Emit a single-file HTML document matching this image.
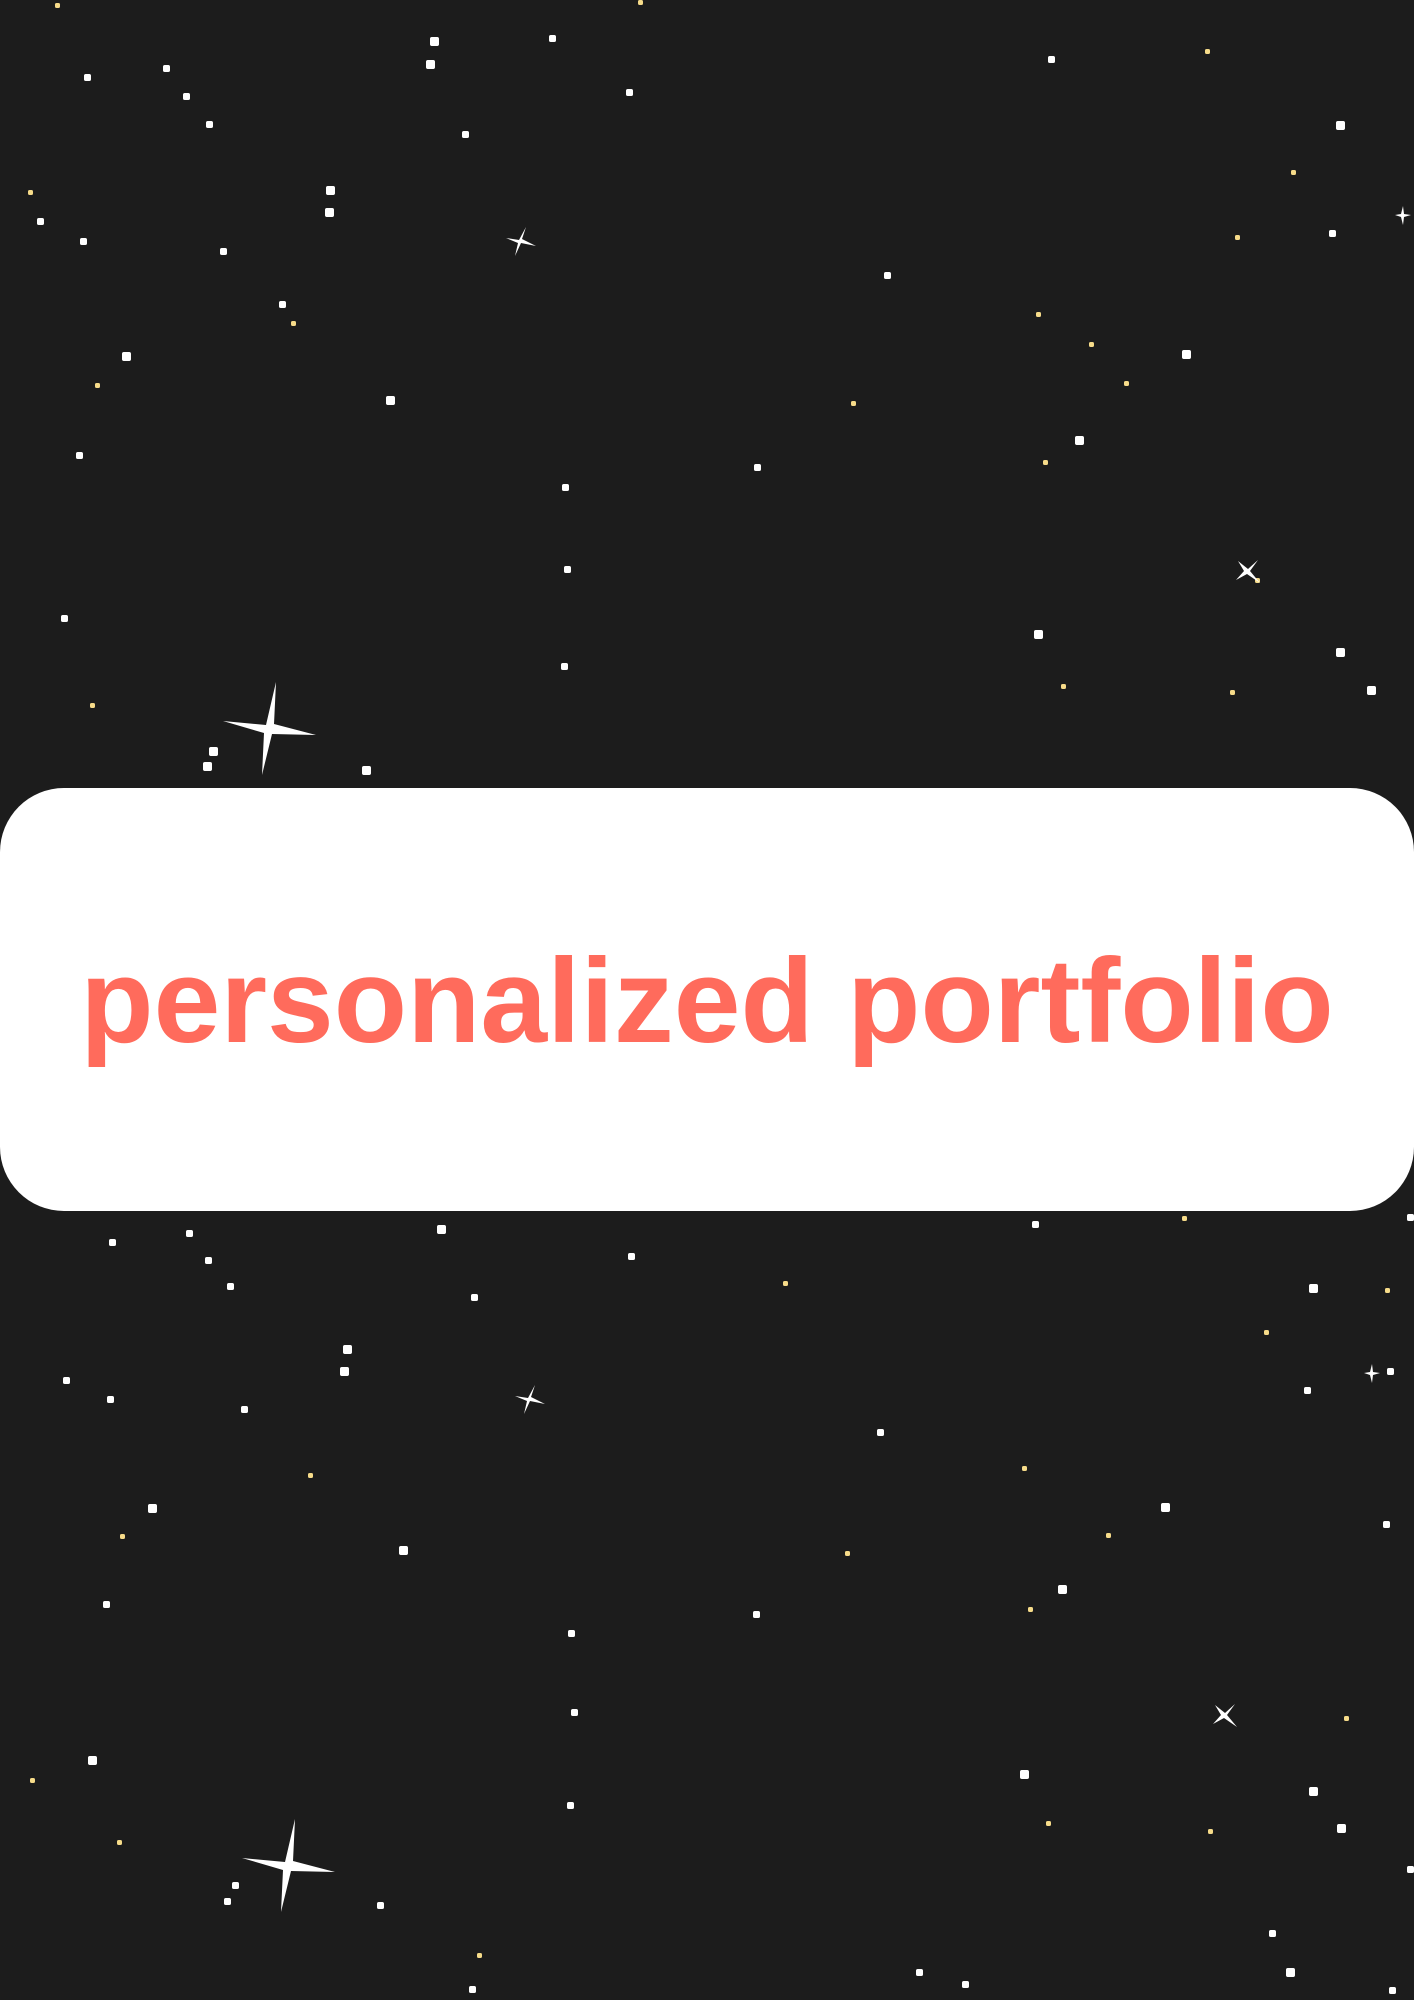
<!DOCTYPE html>
<html><head><meta charset="utf-8"><style>
html,body{margin:0;padding:0;}
body{width:1414px;height:2000px;background:#1c1c1c;position:relative;overflow:hidden;font-family:"Liberation Sans",sans-serif;}
.w,.y{position:absolute;left:0;top:0;width:1px;height:1px;border-radius:50%;}
.w{box-shadow:87px 77px 0 3px #fff,166px 68px 0 3px #fff,186px 96px 0 3px #fff,209px 124px 0 3px #fff,434px 41px 0 4px #fff,430px 64px 0 4px #fff,552px 38px 0 3px #fff,629px 92px 0 3px #fff,465px 134px 0 3px #fff,330px 190px 0 4px #fff,329px 212px 0 4px #fff,83px 241px 0 3px #fff,40px 221px 0 3px #fff,223px 251px 0 3px #fff,126px 356px 0 4px #fff,390px 400px 0 4px #fff,79px 455px 0 3px #fff,565px 487px 0 3px #fff,567px 569px 0 3px #fff,64px 618px 0 3px #fff,564px 666px 0 3px #fff,757px 467px 0 3px #fff,887px 275px 0 3px #fff,1051px 59px 0 3px #fff,1340px 125px 0 4px #fff,1332px 233px 0 3px #fff,1186px 354px 0 4px #fff,1079px 440px 0 4px #fff,1038px 634px 0 4px #fff,1340px 652px 0 4px #fff,1371px 690px 0 4px #fff,213px 751px 0 4px #fff,207px 766px 0 4px #fff,366px 770px 0 4px #fff,441px 1229px 0 4px #fff,189px 1233px 0 3px #fff,112px 1242px 0 3px #fff,208px 1260px 0 3px #fff,230px 1286px 0 3px #fff,631px 1256px 0 3px #fff,474px 1297px 0 3px #fff,347px 1349px 0 4px #fff,344px 1371px 0 4px #fff,66px 1380px 0 3px #fff,110px 1399px 0 3px #fff,244px 1409px 0 3px #fff,152px 1508px 0 4px #fff,403px 1550px 0 4px #fff,106px 1604px 0 3px #fff,756px 1614px 0 3px #fff,571px 1633px 0 3px #fff,574px 1712px 0 3px #fff,92px 1760px 0 4px #fff,570px 1805px 0 3px #fff,880px 1432px 0 3px #fff,1165px 1507px 0 4px #fff,1062px 1589px 0 4px #fff,1386px 1524px 0 3px #fff,1035px 1224px 0 3px #fff,1313px 1288px 0 4px #fff,1307px 1390px 0 3px #fff,1390px 1371px 0 3px #fff,1024px 1774px 0 4px #fff,1313px 1791px 0 4px #fff,1341px 1828px 0 4px #fff,235px 1885px 0 3px #fff,227px 1901px 0 3px #fff,380px 1905px 0 3px #fff,472px 1989px 0 3px #fff,919px 1972px 0 3px #fff,965px 1984px 0 3px #fff,1272px 1933px 0 3px #fff,1290px 1972px 0 4px #fff,1392px 1990px 0 3px #fff,1410px 1869px 0 3px #fff,282px 304px 0 3px #fff,1410px 1217px 0 3px #fff;}
.y{box-shadow:293px 323px 0 2px #f7dc8a,97px 385px 0 2px #f7dc8a,853px 403px 0 2px #f7dc8a,1045px 462px 0 2px #f7dc8a,1126px 383px 0 2px #f7dc8a,1232px 692px 0 2px #f7dc8a,1063px 686px 0 2px #f7dc8a,92px 705px 0 2px #f7dc8a,1257px 580px 0 2px #f7dc8a,1207px 51px 0 2px #f7dc8a,1293px 172px 0 2px #f7dc8a,1237px 237px 0 2px #f7dc8a,1038px 314px 0 2px #f7dc8a,1091px 344px 0 2px #f7dc8a,310px 1475px 0 2px #f7dc8a,122px 1536px 0 2px #f7dc8a,847px 1553px 0 2px #f7dc8a,1030px 1609px 0 2px #f7dc8a,1024px 1468px 0 2px #f7dc8a,1108px 1535px 0 2px #f7dc8a,1266px 1332px 0 2px #f7dc8a,1387px 1290px 0 2px #f7dc8a,1184px 1218px 0 2px #f7dc8a,32px 1780px 0 2px #f7dc8a,119px 1842px 0 2px #f7dc8a,1210px 1831px 0 2px #f7dc8a,1048px 1823px 0 2px #f7dc8a,479px 1955px 0 2px #f7dc8a,785px 1283px 0 2px #f7dc8a,57px 5px 0 2px #f7dc8a,640px 2px 0 2px #f7dc8a,30px 192px 0 2px #f7dc8a,1346px 1718px 0 2px #f7dc8a;}
.card{position:absolute;left:0;top:788px;width:1414px;height:423px;background:#fff;border-radius:64px;}
.t{position:absolute;left:0;width:1414px;top:931px;text-align:center;font-weight:bold;font-size:120px;line-height:140px;color:#ff6b5c;}
svg{position:absolute;left:0;top:0;}
</style></head><body>
<div class="w"></div><div class="y"></div>
<svg width="1414" height="2000">
<g fill="#fff">
<path d="M276,682 L274,724 L316,735 L272,734 L262,775 L264,733 L223,721 L266,725 Z"/>
<path d="M276,682 L274,724 L316,735 L272,734 L262,775 L264,733 L223,721 L266,725 Z" transform="translate(19,1137)"/>
<path d="M526,227 L522,239 L536,246 L521,243 L515,256 L518,243 L506,238 L519,240 Z"/>
<path d="M1258,560 L1250,571 L1260,583 L1247,574 L1236,580 L1244,571 L1238,561 L1248,569 Z"/>
<path d="M535,1385 L531,1397 L545,1404 L530,1401 L524,1414 L527,1401 L515,1396 L528,1398 Z"/>
<path d="M1235,1704 L1227,1715 L1237,1727 L1224,1718 L1213,1724 L1221,1715 L1215,1705 L1225,1713 Z"/>
<path d="M1403,206 L1404,214 L1411,215 L1404,217 L1403,225 L1401,217 L1395,215 L1401,214 Z"/>
<path d="M1372,1364 L1373,1372 L1380,1373 L1373,1375 L1372,1383 L1370,1375 L1364,1373 L1370,1372 Z"/>
</g></svg>
<div class="card"></div>
<div class="t">personalized portfolio</div>
</body></html>
